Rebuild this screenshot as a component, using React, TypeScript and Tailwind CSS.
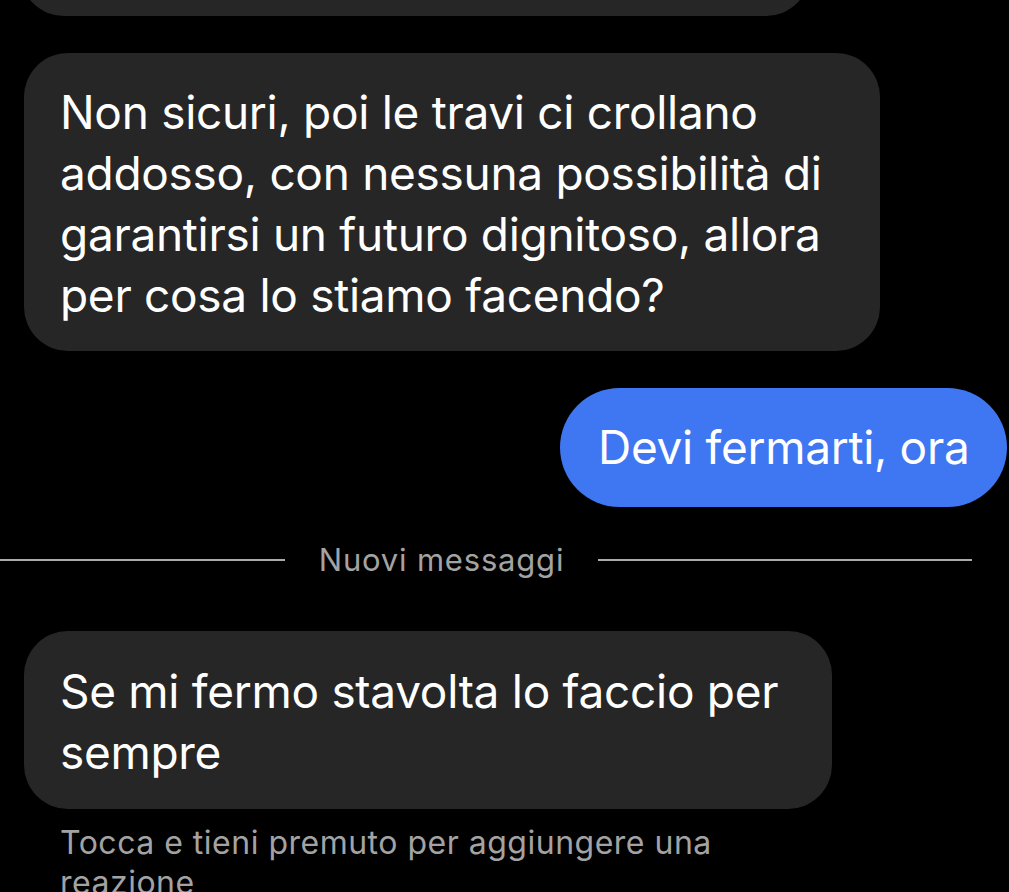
export default function App() {
    const font = { fontFamily: 'Inter, "Noto Sans", sans-serif' };

    return (
        <div className="h-[892px] w-[1009px] overflow-hidden bg-black text-white" style={font}>
            {/* previous message, only the bottom is visible */}
            <div className="mt-[-84px] ml-[20px] h-[100px] w-[790px] rounded-[44px] bg-[#262626]" />

            <div className="mt-[37px] ml-[24px] w-[856px] rounded-[44px] bg-[#262626] px-[36px] pt-[29px] pb-[25px] text-[46px] leading-[61px] tracking-[-0.3px]">
                Non sicuri, poi le travi ci crollano<br />
                addosso, con nessuna possibilità di<br />
                garantirsi un futuro dignitoso, allora<br />
                per cosa lo stiamo facendo?
            </div>

            <div className="mt-[37px] flex justify-end pr-[2px]">
                <div className="flex h-[119px] w-[447px] items-center rounded-[60px] bg-[#3f76f1] pl-[38px] text-[46px] tracking-[-0.3px]">
                    Devi fermarti, ora
                </div>
            </div>

            <div className="mt-[36px] flex items-center">
                <div className="h-[2px] w-[285px] bg-[#ababab]" />
                <span className="w-[313px] text-center text-[31px] leading-[34px] tracking-[0.8px] text-[#a3a3a3]">Nuovi messaggi</span>
                <div className="h-[2px] w-[374px] bg-[#ababab]" />
            </div>

            <div className="mt-[54px] ml-[24px] w-[808px] rounded-[44px] bg-[#262626] px-[36px] pt-[30px] pb-[26px] text-[46px] leading-[61px] tracking-[-0.3px]">
                Se mi fermo stavolta lo faccio per<br />
                sempre
            </div>

            <div className="mt-[14px] pl-[60px] text-[32px] leading-[40px] tracking-[0.5px] text-[#a3a3a3]">
                Tocca e tieni premuto per aggiungere una<br />
                reazione
            </div>
        </div>
    );
}
